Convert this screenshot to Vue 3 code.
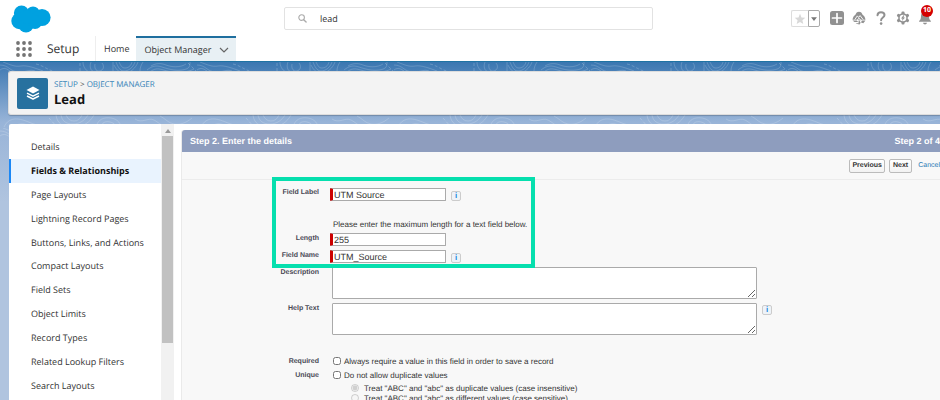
<template>
  <div class="page">
    <header class="global-header">
      <div class="header-top">
        <svg class="logo" viewBox="0 0 40 28" aria-label="Salesforce">
          <g fill="#00a1e0">
            <circle cx="10.500" cy="8" r="7.600" />
            <circle cx="8.500" cy="16" r="8.200" />
            <circle cx="15" cy="20" r="7.600" />
            <circle cx="22" cy="8" r="6.600" />
            <circle cx="31" cy="12.500" r="8.600" />
            <circle cx="24" cy="17" r="7" />
            <circle cx="16" cy="12" r="7" />
          </g>
        </svg>
        <label class="search">
          <svg viewBox="0 0 10 10" aria-hidden="true">
            <circle cx="4" cy="4" r="3.100" fill="none" stroke="#aaa" stroke-width="1.200" />
            <path d="M6.300 6.300 9 9" stroke="#aaa" stroke-width="1.500" stroke-linecap="round" />
          </svg>
          <input v-model="search" type="text" aria-label="Search Setup" />
        </label>
        <div class="actions">
          <div class="favorites">
            <button type="button" aria-label="Favorite">
              <svg viewBox="0 0 12 12"><path fill="#d8d8d8" d="M6 .8 7.500 4.400 11.300 4.700 8.400 7.200 9.300 11 6 8.900 2.700 11 3.600 7.200.7 4.700 4.500 4.400z" /></svg>
            </button>
            <button type="button" class="favorites-menu" aria-label="Favorites list">
              <svg viewBox="0 0 12 12"><path fill="#777" d="M2.500 5h7L6 9.600z" /></svg>
            </button>
          </div>
          <button type="button" class="action" aria-label="Global actions">
            <svg viewBox="0 0 14 14">
              <rect width="14" height="14" rx="2.500" fill="#919191" />
              <path d="M7 2.500v9M2.500 7h9" stroke="#fff" stroke-width="1.700" stroke-linecap="round" />
            </svg>
          </button>
          <button type="button" class="action" aria-label="Guidance center">
            <svg viewBox="0 0 14 14">
              <path fill="#919191" d="M7 .8c2 0 2.900 1.300 3.400 2.700 1.500.9 2.900 3 3.100 5.300H.5c.2-2.300 1.600-4.400 3.100-5.300C4.100 2.100 5 .8 7 .8z" />
              <path fill="none" stroke="#fff" stroke-width=".9" stroke-linejoin="round" d="M2.800 8.600 5.300 4.900 6.600 6.500 8.100 4.600 11.200 8.600M5.300 8.700 6.900 7.300 8.700 8.700" />
              <path fill="#919191" d="M.5 9.600h4.200l1.500 1.500H2.500zM6.500 9.400h2.200l-1 1.200 1 1.100-1.200 1.800c-1.700 0-3-.5-3.800-1.200h2.900zM9.800 9.600h3.700l-2.200 2.700-2.300-.9z" />
            </svg>
          </button>
          <button type="button" class="action" aria-label="Help">
            <svg viewBox="0 0 14 14">
              <path fill="none" stroke="#919191" stroke-width="2" stroke-linecap="round" d="M3.500 4.300C3.600 2.300 5.200 1.200 7 1.200s3.500 1 3.500 2.900C10.500 6.500 7.100 6.500 7.100 9.200" />
              <circle cx="7.100" cy="12.600" r="1.300" fill="#919191" />
            </svg>
          </button>
          <button type="button" class="action" aria-label="Setup">
            <svg viewBox="0 0 14 14">
              <g fill="#919191">
                <rect v-for="angle in [0, 60, 120]" :key="angle" x="5.500" y=".4" width="3" height="13.200" rx="1" :transform="`rotate(${angle} 7 7)`" />
                <circle cx="7" cy="7" r="4.800" />
              </g>
              <circle cx="7" cy="7" r="3.300" fill="#fff" />
              <path fill="#919191" d="M7.500 4.200 5 7.400h1.500L6 9.900l3-3.500H7.400l1-2.200z" />
            </svg>
          </button>
          <button type="button" class="action" aria-label="Notifications">
            <svg viewBox="0 0 14 14">
              <path fill="#919191" d="M7 1a4 4 0 0 1 4 4c0 2.600.5 3.700 1.700 4.700.5.500.3 1.100-.4 1.100H1.700c-.7 0-.9-.6-.4-1.100C2.500 8.700 3 7.600 3 5a4 4 0 0 1 4-4zM5 11.800h4c-.3 1.100-1 1.700-2 1.700s-1.700-.6-2-1.700z" />
            </svg>
            <span class="badge">10</span>
          </button>
        </div>
      </div>

      <nav class="tabs">
        <button type="button" class="launcher" aria-label="App Launcher">
          <svg viewBox="0 0 16 16" fill="#747474">
            <template v-for="y in [2, 8, 14]" :key="y">
              <circle v-for="x in [2, 8, 14]" :key="x" :cx="x" :cy="y" r="1.900" />
            </template>
          </svg>
        </button>
        <span class="app-name">Setup</span>
        <a class="tab" href="#">Home</a>
        <a class="tab active" href="#">
          Object Manager
          <svg viewBox="0 0 10 10"><path d="M1 3l4 4 4-4" fill="none" stroke="#666" stroke-width="1.200" /></svg>
        </a>
      </nav>
    </header>

    <main class="stage">
      <svg class="contours" aria-hidden="true">
        <defs>
          <pattern id="topo" width="197" height="66" patternUnits="userSpaceOnUse">
            <g fill="none" stroke="#fff" stroke-opacity=".22" stroke-width=".8">
              <path d="M0 3c9 0 10 7 19 7s10-3 16-1M3 0c8 3 12 5 18 4s14 2 22 5" />
              <path d="M83 0c0 4 2 8 6 10M95 2c-1 5 2 8 5 7s5-4 2-8M91 0c-2 5 0 9 3 10" />
              <path d="M113 0v10M116 0c2 5 4 9 8 9s9-3 11-9M119 0c2 4 3 6 6 6s6-2 7-6M114 3c3 6 6 8 11 8s11-5 13-11M143 0c-2 3-3 6-3 9" />
              <path d="M147 8c5-4 9-5 15-3s13 4 20 3 8-3 8-8M150 10c6-5 10-3 17-1s20 2 27-2M151 4c5-3 10-3 15-1s14 3 20-1M0 8c4-3 7-1 10 1" />
              <path d="M4 65c4-9 12-9 19-7s10 5 17 5M14 66c3-5 9-5 13-3s6 3 11 3M56 53c1 8 6 12 17 12s17-5 21-12M61 53c1 6 5 9 12 9s12-4 15-9M66 53c2 4 4 6 8 6s6-2 8-6" />
              <path d="M96 65c2-8 8-10 15-9s10 6 10 10M100 66c2-6 6-7 10-6s6 3 6 6M135 57c7 5 13-2 19 1s7 7 17 7M160 54c6 3 8 7 14 8s12-1 18-6" />
            </g>
            <path d="M36 2c6 1 10 5 19 8M80 1v9M49 56l8 9M188 1l9 9" fill="none" stroke="#fff" stroke-opacity=".25" stroke-width=".8" stroke-dasharray="3 2" />
          </pattern>
        </defs>
        <rect width="100%" height="100%" fill="url(#topo)" />
      </svg>

      <section class="page-header">
        <div class="entity-icon">
          <svg viewBox="0 0 14 14">
            <path fill="#fff" d="M7 .6 13.500 4 7 7.400.5 4z" />
            <path fill="none" stroke="#fff" stroke-width="1.500" stroke-linejoin="round" d="M1 7.200l6 3 6-3M1 10l6 3 6-3" />
          </svg>
        </div>
        <div>
          <p class="crumbs"><a href="#">SETUP</a> <span>&gt;</span> <a href="#">OBJECT MANAGER</a></p>
          <h1>Lead</h1>
        </div>
      </section>

      <div class="workspace">
        <aside class="sidebar">
          <ul>
            <li v-for="item in menu" :key="item" :class="{ selected: item === current }">
              <a href="#" @click.prevent="current = item">{{ item }}</a>
            </li>
          </ul>
          <div class="scrollbar" aria-hidden="true">
            <svg viewBox="0 0 10 10"><path d="M2 7l3-4 3 4z" fill="#999" /></svg>
            <div class="thumb"></div>
          </div>
        </aside>

        <form class="wizard" @submit.prevent>
          <div class="wizard-title">
            <h2>Step 2. Enter the details</h2>
            <span>Step 2 of 4</span>
          </div>
          <div class="toolbar">
            <button type="button">Previous</button>
            <button type="submit">Next</button>
            <a href="#">Cancel</a>
          </div>

          <div class="fields">
            <div class="highlight"></div>

            <label class="name" for="field-label">Field Label</label>
            <div class="control first">
              <input id="field-label" v-model="form.label" class="required" type="text" />
              <button type="button" class="info" aria-label="Field label help">i</button>
            </div>

            <p class="hint">Please enter the maximum length for a text field below.</p>

            <label class="name" for="length">Length</label>
            <div class="control">
              <input id="length" v-model="form.length" class="required" type="text" />
            </div>

            <label class="name" for="field-name">Field Name</label>
            <div class="control">
              <input id="field-name" v-model="form.name" class="required" type="text" />
              <button type="button" class="info" aria-label="Field name help">i</button>
            </div>

            <label class="name" for="description">Description</label>
            <div class="control area">
              <textarea id="description" v-model="form.description"></textarea>
            </div>

            <label class="name" for="help-text">Help Text</label>
            <div class="control area">
              <textarea id="help-text" v-model="form.help"></textarea>
              <button type="button" class="info" aria-label="Help text help">i</button>
            </div>

            <label class="name option-name spaced" for="required">Required</label>
            <label class="option spaced">
              <input id="required" v-model="form.required" type="checkbox" />
              Always require a value in this field in order to save a record
            </label>

            <label class="name option-name" for="unique">Unique</label>
            <label class="option">
              <input id="unique" v-model="form.unique" type="checkbox" />
              Do not allow duplicate values
            </label>

            <div class="radios">
              <label>
                <input v-model="form.matching" type="radio" name="matching" value="insensitive" disabled />
                Treat "ABC" and "abc" as duplicate values (case insensitive)
              </label>
              <label>
                <input v-model="form.matching" type="radio" name="matching" value="sensitive" disabled />
                Treat "ABC" and "abc" as different values (case sensitive)
              </label>
            </div>
          </div>
        </form>
      </div>
    </main>
  </div>
</template>

<script setup>
import { reactive, ref } from 'vue'

const search = ref('lead')
const current = ref('Fields & Relationships')

const menu = [
  'Details',
  'Fields & Relationships',
  'Page Layouts',
  'Lightning Record Pages',
  'Buttons, Links, and Actions',
  'Compact Layouts',
  'Field Sets',
  'Object Limits',
  'Record Types',
  'Related Lookup Filters',
  'Search Layouts'
]

const form = reactive({
  label: 'UTM Source',
  length: '255',
  name: 'UTM_Source',
  description: '',
  help: '',
  required: false,
  unique: false,
  matching: 'insensitive'
})
</script>

<style>
body {
  margin: 0;
  overflow: hidden;
}
</style>

<style scoped>
.page {
  display: flex;
  flex-direction: column;
  height: 100vh;
  overflow: hidden;
  font-family: "Open Sans", "Noto Sans", sans-serif;
  font-size: 9px;
  color: #333;
  text-rendering: geometricPrecision;
}

.page * {
  box-sizing: border-box;
}

a {
  color: inherit;
  text-decoration: none;
}

button,
input,
textarea {
  margin: 0;
  padding: 0;
  font: inherit;
  color: inherit;
  text-rendering: inherit;
}

svg {
  display: block;
}

/* Global header */
.global-header {
  background: #fff;
  border-bottom: 1px solid #1f73a3;
}

.header-top {
  display: grid;
  grid-template-columns: 1fr 369px 1fr;
  align-items: center;
  height: 36px;
  padding: 0 8px 0 5px;
}

.logo {
  width: 40px;
  height: 28px;
  margin: 1px 0 0 6px;
}

.search {
  display: flex;
  align-items: center;
  gap: 13px;
  height: 23px;
  padding: 0 13px;
  border: 1px solid #e2e2e2;
  border-radius: 2px;
}

.search svg {
  width: 9px;
  height: 9px;
}

.search input {
  flex: 1;
  min-width: 0;
  border: 0;
  outline: 0;
  background: none;
}

.actions {
  display: flex;
  align-items: center;
  justify-content: flex-end;
  gap: 8px;
}

.actions button {
  border: 0;
  background: none;
}

.actions .favorites {
  display: flex;
  margin-right: 2px;
}

.favorites button {
  width: 17px;
  height: 17px;
  padding: 2px;
  border: 1px solid #ddd;
  border-right: 0;
  border-radius: 2px 0 0 2px;
}

.favorites .favorites-menu {
  width: 12px;
  padding: 0;
  border: 1px solid #aaa;
  border-radius: 0 2px 2px 0;
}

.action {
  position: relative;
  width: 14px;
  height: 14px;
}

.badge {
  position: absolute;
  top: -6px;
  left: 3px;
  width: 12px;
  height: 12px;
  border-radius: 6px;
  background: #d40000;
  color: #fff;
  font-size: 7px;
  font-weight: bold;
  line-height: 12px;
  text-align: center;
}

.tabs {
  display: flex;
  align-items: center;
  height: 25px;
}

.launcher {
  width: 16px;
  height: 16px;
  margin-left: 16px;
  border: 0;
  background: none;
}

.app-name {
  width: 48px;
  margin-left: 15px;
  font-size: 12px;
}

.tab {
  display: flex;
  align-items: center;
  height: 25px;
  padding: 0 7px 0 8px;
  border-left: 1px solid #eee;
}

.tab.active {
  gap: 8px;
  border-top: 2px solid #1f6f9f;
  border-left: 0;
  background: #e8f0f4;
}

.tab svg {
  width: 10px;
  height: 10px;
}

/* Blue backdrop */
.stage {
  position: relative;
  display: flex;
  flex: 1;
  flex-direction: column;
  min-height: 0;
  padding: 9px 0 0 8px;
  background: linear-gradient(#3b77b1, #98b4d8 60px, #b0c4df 140px);
}

.contours {
  position: absolute;
  top: 0;
  left: 0;
  width: 100%;
  height: 100px;
}

.page-header,
.workspace {
  position: relative;
}

.page-header {
  display: flex;
  align-items: center;
  gap: 6px;
  height: 44px;
  padding: 0 8px;
  border: solid #ddd;
  border-width: 1px 0 1px 1px;
  border-radius: 3px 0 0 3px;
  background: #f3f3f3;
  box-shadow: 0 1px 1px #0003;
}

.entity-icon {
  display: grid;
  place-items: center;
  width: 31px;
  height: 31px;
  border-radius: 2px;
  background: #27719f;
}

.entity-icon svg {
  width: 14px;
  height: 14px;
}

.crumbs {
  margin: 0;
  font-size: 8px;
  line-height: 12px;
  color: #555;
}

.crumbs a {
  color: #3784b8;
}

h1 {
  margin: 0;
  font-size: 13px;
  line-height: 16px;
  color: #111;
}

.workspace {
  display: flex;
  flex: 1;
  min-height: 0;
  margin: 9px 0 0 1px;
  border-radius: 2px 0 0 0;
  background: #fff;
}

/* Object menu */
.sidebar {
  display: flex;
  flex: none;
  width: 165px;
}

.sidebar ul {
  display: flex;
  flex: 1;
  flex-direction: column;
  margin: 0;
  padding: 11px 0 3px;
  list-style: none;
}

.sidebar li {
  display: flex;
  flex: 1;
  align-items: center;
  padding-left: 20px;
  border-left: 2px solid transparent;
}

.sidebar li.selected {
  border-color: #1b87f5;
  background: #e9f3fe;
  color: #111;
  font-weight: bold;
}

.scrollbar {
  display: flex;
  flex-direction: column;
  align-items: center;
  width: 13px;
  padding: 2px 1px;
  background: #f1f1f1;
}

.scrollbar svg {
  width: 10px;
  height: 10px;
}

.thumb {
  width: 100%;
  height: 76%;
  background: #c1c1c1;
}

/* Wizard */
.wizard {
  flex: 1;
  min-width: 0;
  margin: 6px 0 0 7px;
  border-left: 1px solid #eaeaea;
  border-radius: 3px 0 0 0;
  background: #f8f8f8;
  font-family: "Liberation Sans", Arial, sans-serif;
  font-size: 8px;
}

.wizard-title {
  display: flex;
  align-items: center;
  justify-content: space-between;
  height: 22px;
  padding-left: 8px;
  border-radius: 3px 0 0 0;
  background: #8e9dbe;
  color: #fff;
  font-size: 9px;
  font-weight: bold;
}

.wizard-title h2 {
  margin: 0;
  font-size: 9px;
}

.toolbar {
  display: flex;
  align-items: center;
  justify-content: flex-end;
  gap: 4px;
  height: 28px;
  border-bottom: 1px solid #ececec;
  font-size: 7px;
}

.toolbar button {
  height: 14px;
  padding: 0 2px;
  border: 1px solid #bbb;
  border-radius: 2px;
  background: linear-gradient(#fff, #f2f2f2);
  font-weight: bold;
}

.toolbar button + button {
  padding: 0 3px;
}

.toolbar a {
  margin-left: 2px;
  color: #2a7ab5;
}

.fields {
  position: relative;
  display: grid;
  grid-template-columns: 137px 1fr;
  column-gap: 11px;
  padding-top: 7px;
}

.highlight {
  position: absolute;
  top: -3px;
  left: 90px;
  width: 263px;
  height: 91px;
  border: 4px solid #06dfae;
  pointer-events: none;
  z-index: 1;
}

.name {
  padding-top: 1px;
  font-size: 7px;
  font-weight: bold;
  line-height: 10px;
  color: #4a4a56;
  text-align: right;
}

.control {
  display: flex;
  gap: 5px;
  align-items: flex-end;
  height: 17px;
  padding-bottom: 4px;
}

.control.first {
  height: 30px;
  padding-bottom: 16px;
}

.control input {
  width: 116px;
  height: 13px;
  padding: 0 1px;
  border: 1px solid #aaa;
  border-radius: 1px;
  background: #fff;
  font-size: 9px;
}

.control input.required {
  border-left: 3px solid #c00;
}

.info {
  width: 10px;
  height: 10px;
  border: 1px solid #ccc;
  border-radius: 2px;
  background: #eef3f8;
  color: #1b87e0;
  font-size: 8px;
  font-weight: bold;
  line-height: 8px;
}

.hint {
  grid-column: 2;
  margin: 0;
  padding: 2px 0 2px 3px;
  line-height: 12px;
}

.control.area {
  height: 36px;
  align-items: flex-start;
  padding: 0 0 0 2px;
}

.area textarea {
  width: 425px;
  height: 32px;
  border: 1px solid #aaa;
  border-radius: 1px;
}

.area .info {
  margin: 2px 0 0;
}

.option,
.radios label {
  display: flex;
  align-items: center;
}

.option {
  gap: 3px;
  height: 14px;
  padding-left: 3px;
}

.option-name {
  line-height: 13px;
}

.spaced {
  margin-top: 15px;
}

.option input {
  width: 8px;
  height: 8px;
}

.radios {
  grid-column: 2;
  padding: 1px 0 0 21px;
}

.radios label {
  gap: 5px;
  height: 10px;
}

.radios input {
  width: 8px;
  height: 8px;
}
</style>
